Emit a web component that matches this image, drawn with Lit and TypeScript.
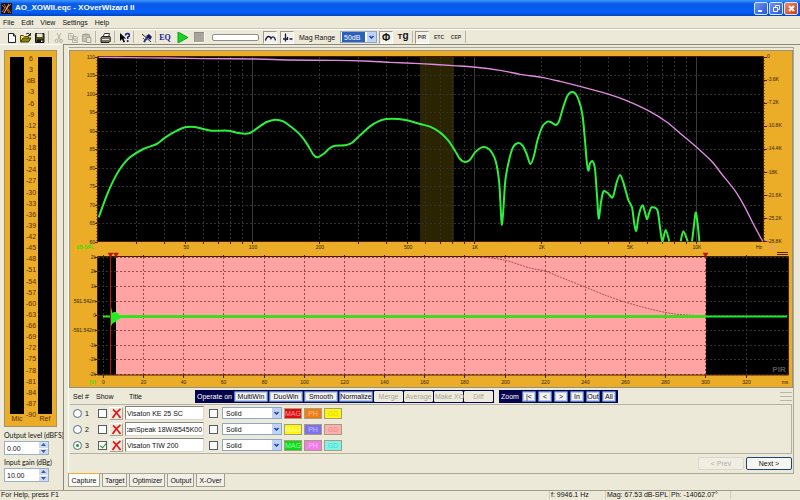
import { LitElement, html, svg, css } from "lit";
import { customElement, state } from "lit/decorators.js";
import { styleMap } from "lit/directives/style-map.js";

type Pt = [number, number];

/** Smooth path through the given points (Catmull-Rom turned into cubic curves). */
function smooth(points: Pt[], tension = 7): string {
  let d = `M${points[0][0]} ${points[0][1]}`;
  for (let i = 0; i < points.length - 1; i++) {
    const a = points[Math.max(0, i - 1)];
    const b = points[i];
    const c = points[i + 1];
    const e = points[Math.min(points.length - 1, i + 2)];
    d += `C${b[0] + (c[0] - a[0]) / tension} ${b[1] + (c[1] - a[1]) / tension} ${c[0] - (e[0] - b[0]) / tension} ${c[1] - (e[1] - b[1]) / tension} ${c[0]} ${c[1]}`;
  }
  return d;
}

/* Curves are sampled at three units per plot pixel. */
const unit = (pts: Pt[], dx = 0): Pt[] => pts.map(([x, y]) => [x / 3 + dx, y / 3 - 7]);

const MAGNITUDE: Pt[] = [
  ...unit([
    [86, 520], [110, 455], [130, 410], [152, 372], [180, 340], [220, 315], [260, 300], [285, 281], [315, 263],
    [345, 250], [375, 249], [400, 255], [425, 260], [475, 260], [510, 268], [540, 267], [565, 250], [590, 234],
    [615, 227], [640, 232], [665, 250], [690, 272], [710, 298], [730, 332], [742, 340], [760, 330], [780, 312],
    [795, 305], [825, 304], [845, 297], [870, 274], [900, 247], [925, 232], [950, 225], [985, 225], [1010, 229],
  ]),
  ...unit([
    [0, 240], [30, 248], [60, 265], [85, 290], [105, 320], [120, 345], [135, 354], [150, 347], [165, 325],
    [185, 310], [200, 311], [215, 325], [228, 355], [238, 420], [246, 542], [256, 410], [268, 345], [280, 308],
    [295, 297], [308, 305], [320, 330], [331, 360], [342, 335], [352, 290], [366, 250], [380, 234], [392, 234],
    [407, 243], [417, 232], [428, 195], [440, 160], [450, 146], [463, 146], [475, 165], [487, 210], [495, 290],
    [500, 350], [505, 380], [510, 358], [518, 352], [525, 375], [532, 470], [536, 524], [543, 475], [550, 443],
    [562, 446], [578, 460], [590, 415], [600, 393], [610, 415], [625, 468], [636, 490], [643, 540], [649, 560],
    [656, 515], [667, 484], [675, 505], [681, 526], [688, 505], [695, 490], [712, 498], [720, 550], [727, 592],
    [737, 558], [748, 592],
  ], 350),
];
const MAG_TAIL_1 = unit([[782, 592], [790, 562], [803, 592]], 350);
const MAG_TAIL_2 = unit([[816, 592], [820, 560], [827, 506], [833, 540], [838, 592]], 350);
const PHASE: Pt[] = [
  ...unit([[86, 40], [170, 41], [290, 42], [400, 44], [560, 45], [660, 48], [800, 49], [880, 51], [960, 55]]),
  ...unit([
    [0, 59], [100, 65], [160, 69], [240, 79], [300, 91], [365, 100], [420, 112], [480, 127], [560, 149],
    [620, 170], [685, 200], [740, 234], [790, 276], [830, 310], [875, 352], [905, 390], [945, 440], [975, 490],
    [1000, 540], [1028, 592],
  ], 350),
];
const WINDOW_TAPER: Pt[] = [[412, 206], [434, 209], [460, 217], [475, 220], [490, 226], [515, 236], [535, 244], [555, 251], [580, 258], [605, 263], [635, 265]];

@customElement("response-charts")
class ResponseCharts extends LitElement {
  static styles = css`
    :host { display: block; background: #ebad27; }
    .plot { display: block; width: 100%; height: auto; }
    .tick { font: 5px "Liberation Sans", Arial, sans-serif; fill: #2c1c00; }
    .end { text-anchor: end; }
    .mid { text-anchor: middle; }
    .live { fill: #3ce000; font-weight: bold; }
    .deg { fill: #ee9a8a; }
    .pir { font: bold 8px "Liberation Sans", Arial, sans-serif; fill: #55555a; text-anchor: middle; }
    .axis { stroke: #4a1d00; fill: none; }
    .grid { stroke: #303030; stroke-dasharray: 2 2; fill: none; }
    .decade { stroke: #3a3a3a; fill: none; }
    .pink-grid { stroke: #9c4848; stroke-dasharray: 2 2; fill: none; }
    .mag { stroke: #2cf03c; stroke-width: 2; fill: none; stroke-linejoin: round; }
    .phase { stroke: #e08ae0; stroke-width: 1.4; fill: none; }
    .taper { stroke: #c04850; stroke-dasharray: 2 1; fill: none; }
  `;

  private fx(f: number) {
    return 183 + 222 * Math.log10(f / 100);
  }

  private upper() {
    const freqs: number[] = [];
    for (const dec of [10, 100, 1000, 10000]) for (let n = 1; n < 10; n++) freqs.push(n * dec);
    const shown = freqs.filter((f) => f > 20 && f < 20000);
    const db = Array.from({ length: 11 }, (_, i) => 110 - i * 5);
    const deg = ["0", "-3.6K", "-7.2K", "-10.8K", "-14.4K", "-18K", "-21.6K", "-25.2K", "-28.8K"];
    const named: [number, string][] = [[50, "50"], [100, "100"], [200, "200"], [500, "500"], [1000, "1K"], [2000, "2K"], [5000, "5K"], [10000, "10K"]];
    return svg`
      <rect x="28" y="6" width="665" height="185" fill="#000"/>
      <rect x="350" y="6" width="34" height="185" fill="#2a2400"/>
      ${shown.map((f) => {
        const x = Math.round(this.fx(f)) - 0.5;
        const lead = Math.log10(f) % 1 === 0;
        return svg`<path class=${lead ? "decade" : "grid"} d="M${x} 6V190"/><path class="axis" d="M${x} 190v3"/>`;
      })}
      ${db.map((v, i) => {
        const y = Math.round(5.5 + i * 18.5) + 0.5;
        return svg`
          ${i > 0 && i < 10 ? svg`<path class="grid" d="M28 ${y}H692"/>` : null}
          <path class="axis" d="M25 ${y}h3"/>
          <text class="tick end" x="25" y=${y + 1.5}>${v}</text>`;
      })}
      <path class="axis" stroke-dasharray="1 2" d="M27 6V191"/>
      <path class="axis" stroke-dasharray="1 2" d="M694 6V191"/>
      <path class="axis" d="M28 5.5H693.5V190.5H27.500V5.500"/>
      ${deg.map((t, i) => svg`
        <path class="axis" d="M693 ${Math.round(5.5 + i * 23.1) + 0.5}h4"/>
        <text class="tick" x="697" y=${Math.round(7 + i * 23.1)}>${t}</text>`)}
      ${named.map(([f, t]) => svg`<text class="tick mid" x=${this.fx(f)} y="198">${t}</text>`)}
      <text class="tick mid" x="689" y="198">Hz</text>
      <text class="tick live" x="6" y="198">dB-SPL</text>
      <text class="tick deg" x="697" y="198">Deg</text>
      <path d="M707 201.500h11M707 203.500h11" stroke="#5a2000"/>
      <path class="phase" d=${smooth(PHASE)}/>
      <path class="mag" d=${smooth(MAGNITUDE)}/>
      <path class="mag" d=${smooth(MAG_TAIL_1)}/>
      <path class="mag" d=${smooth(MAG_TAIL_2)}/>`;
  }

  private lower() {
    const levels = ["2k", "2k", "1k", "591.542m", "0", "-591.542m", "-1k", "-2k", "-2k"];
    const times = Array.from({ length: 17 }, (_, i) => i * 20);
    const tx = (t: number) => Math.round(33 + t * 2.008) + 0.5;
    const ly = (i: number) => Math.round(205.5 + i * 14.7) + 0.5;
    return svg`
      <rect x="28" y="206" width="690" height="118" fill="#000"/>
      <rect x="46" y="206" width="590" height="118" fill="#ffa3a3"/>
      ${times.map((t) => svg`
        <path class=${t > 0 && t < 310 ? "pink-grid" : "grid"} d="M${tx(t)} 206V324"/>
        <path class="axis" d="M${tx(t)} 324v3M${tx(t)} 204v2"/>
        <text class="tick mid" x=${tx(t)} y="333">${t}</text>`)}
      ${levels.map((t, i) => svg`
        <path class="grid" d="M28 ${ly(i)}H46M636 ${ly(i)}H718"/>
        <path class="pink-grid" d="M46 ${ly(i)}H636"/>
        <path class="axis" d="M25 ${ly(i)}h3"/>
        <text class="tick end" x="26" y=${ly(i) + 1.5}>${t}</text>`)}
      <path class="axis" d="M27.500 205.500H718.500V324H27.500Z"/>
      <path class="taper" d=${smooth(WINDOW_TAPER)}/>
      <path d="M46 265.500H636" stroke="#3ddc20" stroke-width="3"/>
      <path d="M33 265.500H40M636 265.500H717" stroke="#22ee22" stroke-width="2"/>
      <path d="M41 256l1.500 6 1.500-1 2 0 3 2.500 2 1.500 20 .5v.5l-20 1-2 1-3 2.500-2 1-1.500 1-1.500 3z" fill="#20f020"/>
      <path d="M40.500 204V324" stroke="#c01010"/>
      <path d="M38 202h5l-2.500 4zM43.500 202h5l-2.500 4zM633 202h5l-2.500 4z" fill="#c81400" stroke="#a01000" stroke-width=".5"/>
      <text class="pir" x="709" y="321">PIR</text>
      <text class="tick live" x="19" y="333">(V)</text>
      <text class="tick mid" x="715" y="333">ms</text>`;
  }

  render() {
    return html`<svg class="plot" viewBox="0 0 722 336" role="img" aria-label="Magnitude, phase and impulse response">
      ${this.upper()}${this.lower()}
    </svg>`;
  }
}

const ICONS = {
  app: svg`<rect width="11" height="11" fill="#1c1410"/><path d="M1 2l3 3-3 4M10 1L6 5l4 5M3 1l5 9" stroke="#d4572a" fill="none"/><path d="M8 1L3 10" stroke="#d8c8a0"/>`,
  new: svg`<path d="M2.500 1.500h5l2 2.500v6.500h-7z" fill="#fff" stroke="#222"/><path d="M7.500 1.500v2.500h2" fill="none" stroke="#222"/>`,
  open: svg`<path d="M.5 10V3.500h3l1 1h4V6" fill="#f4e44c" stroke="#55500a"/><path d="M.5 10l2.500-4h8L8.500 10z" fill="#8c8410" stroke="#3c3804"/><path d="M6 2q2-2 4 .8M10.500 1v2.500H8" fill="none" stroke="#222"/>`,
  save: svg`<path d="M1.500 1.500h8.500v9h-8.500z" fill="#55551a" stroke="#111"/><path d="M3 1.500h5.500V5H3z" fill="#e8e8e0"/><path d="M3 7.500h6V11H3z" fill="#111"/><path d="M7 8.500h1.500V10H7z" fill="#eee"/>`,
  cut: svg`<path d="M4 1l3.500 7M8 1L4.500 8" stroke="#b4b1a4" fill="none"/><circle cx="3.500" cy="9" r="1.500" stroke="#b4b1a4" fill="none"/><circle cx="8" cy="9" r="1.500" stroke="#b4b1a4" fill="none"/>`,
  copy: svg`<path d="M1.500 1.500h4l1 1v5h-5zM5.500 4.500h4l1.500 1.500v4.500h-5.500z" fill="#e6e3d4" stroke="#b4b1a4"/><path d="M3 4h2M7 7h3M7 8.500h3" stroke="#b4b1a4"/>`,
  paste: svg`<path d="M1.500 2.500h7v7h-7z" fill="#c6c3b4" stroke="#a5a295"/><path d="M3.500 1.500h3v2h-3z" fill="#a5a295"/><path d="M5.500 5.500h4.500v5h-4.500z" fill="#e6e3d4" stroke="#a5a295"/>`,
  print: svg`<path d="M3 5l1.500-3.500h5L8.500 5z" fill="#fff" stroke="#333"/><path d="M1 5.500l1.500-1h7.500l1 1v3l-2 2H1z" fill="#77756c" stroke="#222"/><path d="M2 7.500h7" stroke="#e8e8d0"/>`,
  help: svg`<path d="M1 1v8l2-2 1.500 3.500 1.500-.8L4.500 6.500h2.500z" fill="#000"/><path d="M6.500 3.500q0-2 2-2t2 1.800q0 1.200-1.800 2V7" stroke="#16167c" stroke-width="1.500" fill="none"/><circle cx="8.700" cy="9" r="1" fill="#16167c"/>`,
  mic: svg`<path d="M1 2l9 8" stroke="#2a2a2a"/><path d="M3 10l5-7" stroke="#26268c" stroke-width="2"/><path d="M5 4l3-2 3 3-2 3z" fill="#1a1a5c"/><path d="M2 6l3 3" stroke="#555"/>`,
  play: svg`<path d="M1 0l10 5.500L1 11z" fill="#14d424" stroke="#14a020"/>`,
  stop: svg`<rect width="11" height="11" fill="#a8a69c"/><path d="M0 10.500h10.500V0" stroke="#f8f8f0" fill="none"/><path d="M0 10V.500h10" stroke="#8c8a80" fill="none"/>`,
  curve: svg`<path d="M.5 8.500q1-4 3-4t2.500 2q1-2 2.500-1.500t2 3.500" fill="none" stroke="#18184c" stroke-width="1.300"/>`,
  pulse: svg`<path d="M1 7h4M7.500 7h3M3.500 1.500v8M5.500 5v3" stroke="#18184c" stroke-width="1.300" fill="none"/>`,
  cross: svg`<path d="M2 1.500q4 3 7.500 8.500M9.500 1Q5 4 1.500 10" stroke="#d81c20" stroke-width="1.700" fill="none"/>`,
};

const icon = (name: keyof typeof ICONS) => html`<svg class="icon" viewBox="0 0 11 11" aria-hidden="true">${ICONS[name]}</svg>`;

const METER_MARKS = Array.from({ length: 33 }, (_, i) => (i === 2 ? "dB" : String(6 - i * 3)));

const ROWS = [
  { title: "Visaton KE 25 SC", colors: ["#e00c10", "#ee7d18", "#fbf60c"], ink: ["#ff9c9c", "#ffc890", "#e6d820"] },
  { title: "ScanSpeak 18W/8545K00", colors: ["#fbf60c", "#7c70f0", "#fcb0b0"], ink: ["#fffca8", "#c8c4ff", "#ee8888"] },
  { title: "Visaton TIW 200", colors: ["#0cd81c", "#f07ce8", "#7cf4ea"], ink: ["#90ff98", "#ffc0fa", "#50d4cc"] },
];

@customElement("app-root")
class AppRoot extends LitElement {
  @state() private selected = 2;
  @state() private tab = "Capture";

  static styles = css`
    :host { display: flex; flex-direction: column; min-height: 100vh; background: #ece9d8; color: #111; font: 7px/9px "Liberation Sans", Arial, sans-serif; }
    * { box-sizing: border-box; }
    button, input, select { font: inherit; color: inherit; margin: 0; padding: 0; border: 0; border-radius: 0; min-width: 0; }
    button { background: none; white-space: nowrap; }
    .icon { width: 11px; height: 11px; display: block; flex: none; }

    .titlebar { display: flex; align-items: center; gap: 3px; height: 16px; padding: 0 2px 0 1px; background: linear-gradient(#3c96ff, #0a58e6 25%, #0460f8 75%, #0244c0); }
    .caption { flex: 1; margin: 0; font-size: 8px; line-height: 12px; font-weight: bold; color: #fff; }
    .winbtns { display: flex; gap: 1px; }
    .win { display: grid; place-items: center; width: 14px; height: 13px; border: 1px solid #d8e4ff; border-radius: 2px; background: linear-gradient(135deg, #6c98f4, #2456d0); }
    .close { background: linear-gradient(135deg, #ee8c68, #cc3c14); }
    .menu { display: flex; align-items: center; gap: 7px; height: 13px; padding: 0 3px; border-bottom: 1px solid #c8c5b4; }
    .toolbar { display: flex; align-items: center; height: 15px; padding-left: 4px; border-top: 1px solid #fff; }
    .group { display: flex; align-items: center; gap: 3px; }
    .tight { gap: 0; }
    .tool { display: grid; place-items: center; width: 14px; height: 13px; }
    .pressed { border: 1px solid; border-color: #9c998a #fff #fff #9c998a; background: #f4f2e8; }
    .sep { width: 5px; height: 12px; flex: none; background: linear-gradient(90deg, transparent 2px, #b8b5a5 2px, #b8b5a5 3px, transparent 3px); }
    .wide { width: 8px; }
    .eq { font: bold 8px/9px "Liberation Serif", serif; color: #18189c; }
    .sym { font-weight: bold; font-size: 10px; }
    .tg { display: flex; justify-content: center; align-items: baseline; }
    .small-t { font-size: 8px; }
    .tiny { font-size: 5px; font-weight: bold; color: #444; }
    .progress { width: 47px; height: 7px; margin: 0 4px 0 6px; border: 1px solid #908e84; border-radius: 2px; background: #fff; }
    .range { display: flex; align-items: center; justify-content: space-between; width: 78px; margin: 0 2px 0 5px; white-space: nowrap; }

    .pick { position: relative; display: block; height: 12px; border: 1px solid #8ea6c0; background: #fff; }
    .pick select { display: block; width: 100%; height: 10px; padding-left: 3px; appearance: none; background: #fff; }
    .pick .arrow { position: absolute; right: 0; top: 0; width: 9px; height: 10px; background: #c0d2fa; pointer-events: none; }
    .pick.mag-range { width: 37px; }
    .mag-range select { background: linear-gradient(90deg, #fff 1px, #2c60bc 1px, #2c60bc 24px, #fff 24px); color: #fff; }

    .body { flex: 1; display: flex; }
    .left { display: flex; flex-direction: column; width: 63px; padding: 5px 0 0 4px; border-top: 1px solid #fff; }
    .meter { flex: 1; display: grid; grid-template-columns: 14px 1fr 14px; grid-template-rows: 1fr 12px; width: 53px; padding: 6px 4px 0 5px; border: 1px solid #a09468; background: #ebad27; text-align: center; color: #5a2c00; }
    .bar { background: #000; grid-row: 1; }
    .scale { grid-row: 1; grid-column: 2; display: flex; flex-direction: column; justify-content: space-between; margin: -3px 0 -5px; line-height: 9px; }
    .foot { grid-row: 2; line-height: 10px; }
    .foot-ref { grid-column: 3; }
    .field { display: block; white-space: nowrap; height: 9px; font-family: Lato, "Liberation Sans", sans-serif; }
    .fields { padding: 4px 0 5px; }
    .spin { display: flex; width: 45px; height: 14px; margin: 1px 0 3px; border: 1px solid #9caec4; background: #fff; }
    .spin input { flex: 1; width: 0; padding-left: 2px; }
    .steps { display: flex; flex-direction: column; width: 9px; gap: 1px; }
    .step { flex: 1; display: grid; place-items: center; background: #ccdaf8; }

    .right { flex: 1; min-width: 0; display: flex; flex-direction: column; padding: 2px 6px 0 4px; border: solid #8c897a; border-width: 1px 0 0 1px; }
    .page { flex: 1; display: flex; flex-direction: column; padding: 2px 1px 0 1px; border: 1px solid #a8a698; border-left-color: #fff; }
    .charts { border: 1px solid #98927c; margin: 0 -1px; }
    .strip { display: flex; align-items: center; height: 16px; padding: 1px 0 0 3px; }
    .heads { display: grid; grid-template-columns: 23px 33px 66px; line-height: 12px; }
    .ops { display: flex; align-items: center; gap: 1px; height: 13px; padding: 1px; background: #04044c; color: #fff; }
    .ops-label { width: 37px; text-align: center; font-weight: normal; }
    .op { height: 11px; width: 34px; text-align: center; border: 1px solid #5878b8; border-radius: 1px; background: #f4f2ea; color: #08082c; box-shadow: inset 0 0 0 1px #b4c8ee; }
    .op:disabled { width: 29px; color: #a8a598; border-color: #f0eee2; box-shadow: none; background: #eeebdd; }
    .zoom { margin-left: 5px; gap: 2px; padding-right: 2px; }
    .zoom-label { width: 20px; text-align: center; }
    .zoom .op { width: 14px; }
    .grip { margin-left: auto; width: 12px; height: 10px; background: repeating-linear-gradient(#b8b5a5 0 1px, transparent 1px 4px); }

    .curves { border: 1px solid #b4b1a2; border-left: 0; padding-left: 3px; }
    .curve { display: grid; grid-template-columns: 22px 10px 14px 79px 14px 60px 18px 18px 18px; align-items: center; column-gap: 2px; height: 16px; }
    .choose { display: flex; align-items: center; gap: 3px; }
    .radio { appearance: none; width: 9px; height: 9px; border: 1px solid #4c6c8c; border-radius: 50%; background: #fff; }
    .radio:checked { background: radial-gradient(#28a028 0 1px, #fff 2px); }
    .tickbox { appearance: none; justify-self: center; width: 9px; height: 9px; border: 1px solid #545c64; background: #fff; position: relative; }
    .tickbox:checked::after { content: ""; position: absolute; left: 2px; top: 0; width: 3px; height: 5px; border: solid #209020; border-width: 0 1px 1px 0; transform: rotate(40deg); }
    .del { display: grid; place-items: center; width: 14px; height: 13px; border: 1px solid; border-color: #fff #a8a598 #a8a598 #fff; }
    .name { width: 100%; height: 14px; padding: 0 1px; border: 1px solid; border-color: #84827a #dcd9cc #dcd9cc #84827a; background: #fff; }
    .swatch { height: 11px; border: 1px solid #a89c7c; text-align: center; line-height: 9px; }
    .nav { flex: 1; display: flex; justify-content: flex-end; align-items: flex-start; gap: 2px; padding-top: 3px; min-height: 19px; }
    .step-btn { width: 46px; height: 13px; border: 1px solid #1c4478; border-radius: 2px; background: #f8f6f0; font-size: 7px; }
    .step-btn:disabled { border-color: #dcd9ca; color: #b4b1a2; background: #f0eee2; }
    .tabs { display: flex; gap: 2px; height: 16px; align-items: flex-start; }
    .tab { height: 13px; padding: 0 2px; border: 1px solid #a09e92; border-top: 0; background: #f2f0e6; }
    .on { height: 14px; width: 32px; background: #fcfcf8; border-top: 1px solid #eeb030; margin-top: -1px; }
    .status { display: flex; align-items: center; height: 12px; padding: 0 69px 1px 1px; border-top: 1px solid #a09d8e; border-bottom: 2px solid #3c68c0; white-space: nowrap; line-height: 8px; }
    .hint { flex: 1; }
    .cell { padding-left: 1px; border-left: 1px solid #cfccbc; }
    .freq { width: 56px; }
    .magn { width: 64px; }
    .phs { width: 62px; border-right: 1px solid #cfccbc; }
  `;

  firstUpdated() {
    for (const el of this.renderRoot.querySelectorAll<HTMLInputElement>(".name")) el.scrollLeft = el.scrollWidth;
  }

  private arrow() {
    return html`<svg class="arrow" viewBox="0 0 9 10" aria-hidden="true"><path d="M2.500 4l2 2 2-2" fill="none" stroke="#24408c" stroke-width="1.500" /></svg>`;
  }

  private spin(label: string, id: string, value: string) {
    return html`<label class="field" for=${id}>${label}</label>
      <div class="spin">
        <input id=${id} .value=${value} />
        <div class="steps">
          <button class="step" aria-label="Increase"><svg width="5" height="3"><path d="M0 3l2.500-3L5 3z" fill="#3c5c9c" /></svg></button>
          <button class="step" aria-label="Decrease"><svg width="5" height="3"><path d="M0 0l2.500 3L5 0z" fill="#3c5c9c" /></svg></button>
        </div>
      </div>`;
  }

  private tool(name: keyof typeof ICONS, label: string, pressed = false) {
    return html`<button class="tool ${pressed ? "pressed" : ""}" aria-label=${label}>${icon(name)}</button>`;
  }

  private toolbar() {
    return html`<div class="toolbar" role="toolbar">
      <div class="group tight">${this.tool("new", "New")}${this.tool("open", "Open")}${this.tool("save", "Save")}</div>
      <span class="sep"></span>
      <div class="group tight">${this.tool("cut", "Cut")}${this.tool("copy", "Copy")}${this.tool("paste", "Paste")}</div>
      <span class="sep"></span>${this.tool("print", "Print")}<span class="sep"></span>${this.tool("help", "Help")}
      <span class="sep wide"></span>${this.tool("mic", "Microphone")}<span class="sep"></span>
      <div class="group"><button class="tool eq">EQ</button>${this.tool("play", "Start")}${this.tool("stop", "Stop")}</div>
      <div class="progress" role="progressbar" aria-label="Progress"></div>
      <div class="group">${this.tool("curve", "Frequency view", true)}${this.tool("pulse", "Impulse view", true)}</div>
      <div class="range">
        <label for="range">Mag Range</label>
        <div class="pick mag-range"><select id="range"><option>50dB</option></select>${this.arrow()}</div>
      </div>
      <div class="group"><button class="tool pressed sym">Φ</button><button class="tool sym tg"><span class="small-t">T</span>g</button></div>
      <span class="sep"></span>
      <div class="group"><button class="tool pressed tiny">PIR</button><button class="tool tiny">ETC</button><button class="tool tiny">CEP</button></div>
      <span class="sep"></span>
    </div>`;
  }

  private row(r: (typeof ROWS)[number], i: number) {
    return html`<div class="curve">
      <label class="choose"><input class="radio" type="radio" name="sel" .checked=${this.selected === i} @change=${() => (this.selected = i)} />${i + 1}</label>
      <input class="tickbox" type="checkbox" aria-label="Show" .checked=${i === 2} />
      <button class="del" aria-label="Delete">${icon("cross")}</button>
      <input class="name" aria-label="Title" .value=${r.title} />
      <input class="tickbox" type="checkbox" aria-label="Operate on" />
      <div class="pick"><select aria-label="Line style"><option>Solid</option></select>${this.arrow()}</div>
      ${["MAG", "PH", "GD"].map((t, k) => html`<button class="swatch" style=${styleMap({ background: r.colors[k], color: r.ink[k] })}>${t}</button>`)}
    </div>`;
  }

  render() {
    return html`
      <header class="titlebar">
        ${icon("app")}
        <h1 class="caption">AO_XOWII.eqc - XOverWizard II</h1>
        <div class="winbtns">
          <button class="win" aria-label="Minimize"><svg width="9" height="9"><path d="M1 7h4" stroke="#fff" stroke-width="2" /></svg></button>
          <button class="win" aria-label="Restore"><svg width="9" height="9"><path d="M3.500 3V1.500h4v4H6M1.500 3.500h4v4h-4z" stroke="#fff" fill="none" /></svg></button>
          <button class="win close" aria-label="Close"><svg width="9" height="9"><path d="M2 2l5 5M7 2L2 7" stroke="#fff" stroke-width="2" /></svg></button>
        </div>
      </header>
      <nav class="menu">${["File", "Edit", "View", "Settings", "Help"].map((m) => html`<button>${m}</button>`)}</nav>
      ${this.toolbar()}
      <main class="body">
        <aside class="left">
          <div class="meter">
            <div class="bar"></div>
            <div class="scale">${METER_MARKS.map((m) => html`<span>${m}</span>`)}</div>
            <div class="bar"></div>
            <span class="foot">Mic</span><span class="foot foot-ref">Ref</span>
          </div>
          <div class="fields">${this.spin("Output level (dBFS)", "out", "0.00")}${this.spin("Input gain (dBg)", "gain", "10.00")}</div>
        </aside>
        <section class="right">
          <div class="page">
            <response-charts class="charts"></response-charts>
            <div class="strip">
              <div class="heads"><span>Sel #</span><span>Show</span><span>Title</span></div>
              <div class="ops">
                <span class="ops-label">Operate on</span>
                ${["MultiWin", "DuoWin", "Smooth", "Normalize"].map((t) => html`<button class="op">${t}</button>`)}
                ${["Merge", "Average", "Make XO", "Diff"].map((t) => html`<button class="op" disabled>${t}</button>`)}
              </div>
              <div class="ops zoom">
                <span class="zoom-label">Zoom</span>
                ${["|<", "<", ">", "In", "Out", "All"].map((t) => html`<button class="op">${t}</button>`)}
              </div>
              <span class="grip"></span>
            </div>
            <div class="curves">${ROWS.map((r, i) => this.row(r, i))}</div>
            <div class="nav"><button class="step-btn" disabled>&lt; Prev</button><button class="step-btn">Next &gt;</button></div>
          </div>
          <div class="tabs" role="tablist">
            ${["Capture", "Target", "Optimizer", "Output", "X-Over"].map(
              (t) => html`<button role="tab" class="tab ${this.tab === t ? "on" : ""}" @click=${() => (this.tab = t)}>${t}</button>`
            )}
          </div>
        </section>
      </main>
      <footer class="status">
        <span class="hint">For Help, press F1</span>
        <span class="cell freq">f: 9946.1 Hz</span><span class="cell magn">Mag: 67.53 dB-SPL</span><span class="cell phs">Ph: -14062.07°</span>
      </footer>`;
  }
}
